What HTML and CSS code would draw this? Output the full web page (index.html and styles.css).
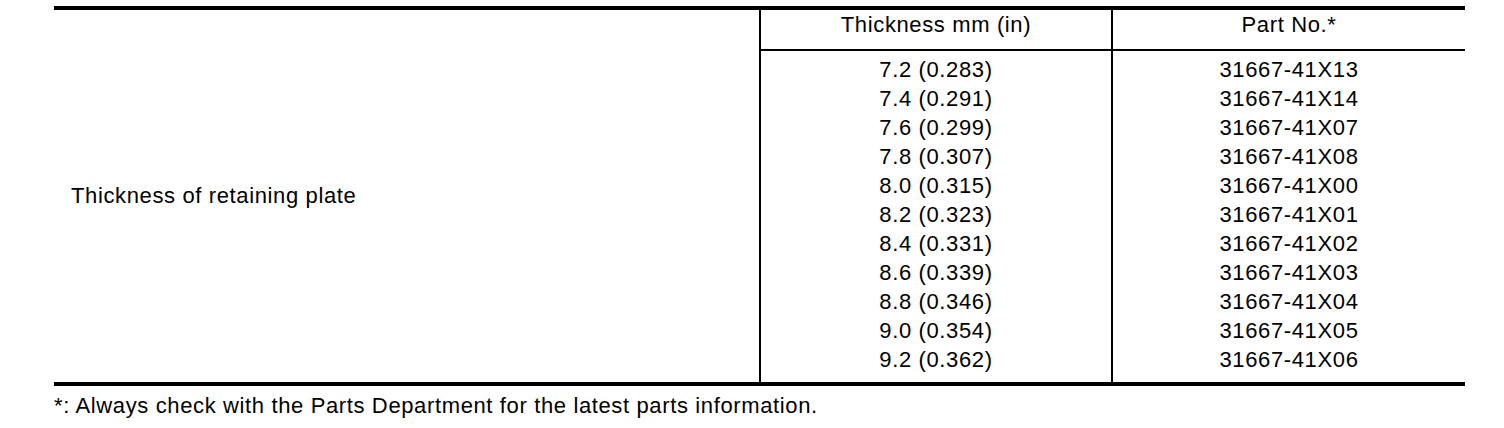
FILE: index.html
```html
<!DOCTYPE html>
<html lang="en">
<head>
    <meta charset="UTF-8">
    <meta name="viewport" content="width=device-width, initial-scale=1.0">
    <title>Thickness of retaining plate</title>
    <link rel="stylesheet" href="styles.css">
</head>
<body>
    <table class="spec">
        <tr>
            <td class="item" rowspan="2">Thickness of retaining plate</td>
            <th class="col-thick">Thickness mm (in)</th>
            <th class="col-part">Part No.*</th>
        </tr>
        <tr>
            <td class="values">
                <div>7.2 (0.283)</div>
                <div>7.4 (0.291)</div>
                <div>7.6 (0.299)</div>
                <div>7.8 (0.307)</div>
                <div>8.0 (0.315)</div>
                <div>8.2 (0.323)</div>
                <div>8.4 (0.331)</div>
                <div>8.6 (0.339)</div>
                <div>8.8 (0.346)</div>
                <div>9.0 (0.354)</div>
                <div>9.2 (0.362)</div>
            </td>
            <td class="values">
                <div>31667-41X13</div>
                <div>31667-41X14</div>
                <div>31667-41X07</div>
                <div>31667-41X08</div>
                <div>31667-41X00</div>
                <div>31667-41X01</div>
                <div>31667-41X02</div>
                <div>31667-41X03</div>
                <div>31667-41X04</div>
                <div>31667-41X05</div>
                <div>31667-41X06</div>
            </td>
        </tr>
    </table>
    <div class="note">*: Always check with the Parts Department for the latest parts information.</div>
</body>
</html>
```

FILE: styles.css
```css
body {
    margin: 0;
    padding: 6px 0 0 54px;
    background-color: #fff;
    color: #000;
    font-family: "Liberation Sans", Arial, sans-serif;
    font-size: 22px;
    letter-spacing: 0.63px;
}
.spec {
    width: 1411px;
    table-layout: fixed;
    border-collapse: separate;
    border-spacing: 0;
    border-top: 4px solid #000;
    border-bottom: 4px solid #000;
}
.spec th, .spec td {
    box-sizing: border-box;
    padding: 0;
    font-weight: normal;
    text-align: center;
}
.spec .item {
    width: 705px;
    text-align: left;
    padding-left: 17px;
    vertical-align: middle;
}
.spec th {
    line-height: 26px;
    padding: 2px 0 11px;
    vertical-align: top;
    border-bottom: 2px solid #000;
}
.col-thick {
    width: 352px;
    border-left: 2px solid #000;
}
.col-part {
    width: 354px;
}
.spec .col-part, .spec .values {
    border-left: 2px solid #000;
}
.spec .values {
    line-height: 29px;
    padding: 4px 0 8px;
    vertical-align: top;
}
.note {
    margin-top: 5px;
    line-height: 29px;
}
```
